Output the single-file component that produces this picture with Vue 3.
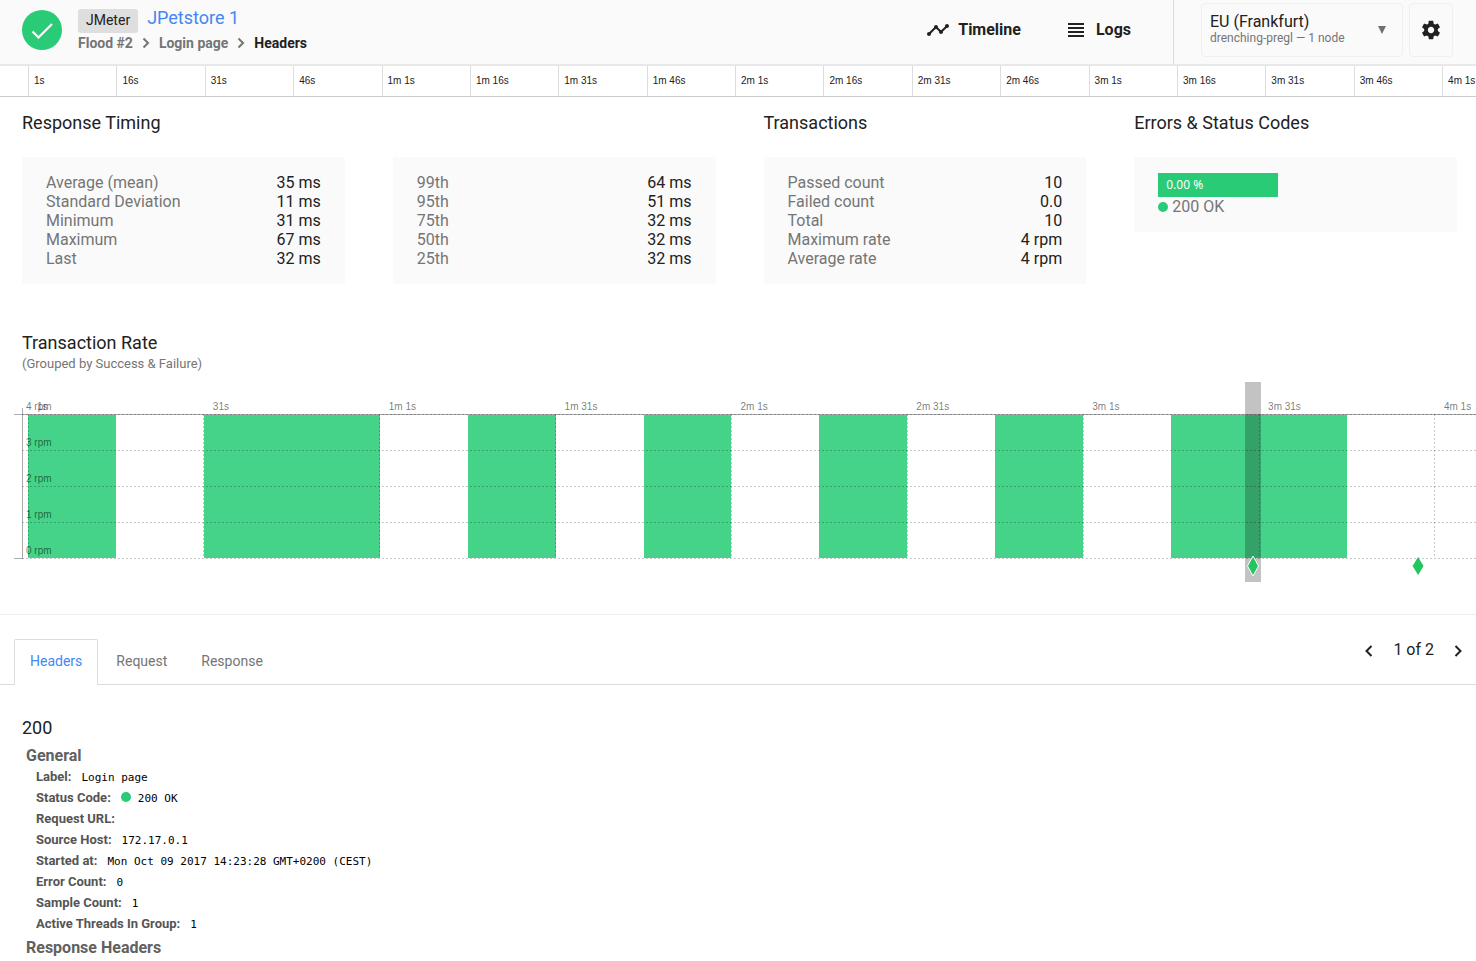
<script setup>
import { ref } from 'vue'

const ticks = ['1s', '16s', '31s', '46s', '1m 1s', '1m 16s', '1m 31s', '1m 46s', '2m 1s', '2m 16s', '2m 31s', '2m 46s', '3m 1s', '3m 16s', '3m 31s', '3m 46s', '4m 1s']

const timing = [
  ['Average (mean)', '35 ms'],
  ['Standard Deviation', '11 ms'],
  ['Minimum', '31 ms'],
  ['Maximum', '67 ms'],
  ['Last', '32 ms'],
]
const percentiles = [
  ['99th', '64 ms'],
  ['95th', '51 ms'],
  ['75th', '32 ms'],
  ['50th', '32 ms'],
  ['25th', '32 ms'],
]
const transactions = [
  ['Passed count', '10'],
  ['Failed count', '0.0'],
  ['Total', '10'],
  ['Maximum rate', '4 rpm'],
  ['Average rate', '4 rpm'],
]
const groups = [
  { title: 'Response Timing', rows: timing },
  { title: '', rows: percentiles },
  { title: 'Transactions', rows: transactions },
]

// Seconds covered by the chart's horizontal axis
const span = 247
const pct = (seconds) => `${(seconds / span) * 100}%`

const bars = [[0, 15], [30, 60], [75, 90], [105, 120], [135, 150], [165, 180], [195, 225]]
const chartTicks = [[0, '1s'], [30, '31s'], [60, '1m 1s'], [90, '1m 31s'], [120, '2m 1s'], [150, '2m 31s'], [180, '3m 1s'], [210, '3m 31s'], [240, '4m 1s']]
const rates = [4, 3, 2, 1, 0]
const rateY = (rate) => 177 - rate * 36

const tabs = ['Headers', 'Request', 'Response']
const activeTab = ref('Headers')

const details = [
  ['Label:', 'Login page'],
  ['Status Code:', '200 OK', true],
  ['Request URL:', ''],
  ['Source Host:', '172.17.0.1'],
  ['Started at:', 'Mon Oct 09 2017 14:23:28 GMT+0200 (CEST)'],
  ['Error Count:', '0'],
  ['Sample Count:', '1'],
  ['Active Threads In Group:', '1'],
]
</script>

<template>
  <div class="page">
    <header class="topbar">
      <svg class="status" viewBox="0 0 40 40" role="img" aria-label="Passed">
        <circle cx="20" cy="20" r="20" fill="#29cb76" />
        <path d="M10.5 21.5 16.5 27.5 30 14" fill="none" stroke="#fff" stroke-width="2.2" />
      </svg>
      <div class="heading">
        <div class="project">
          <span class="tag">JMeter</span>
          <a href="#" class="project-link">JPetstore 1</a>
        </div>
        <nav class="crumbs" aria-label="Breadcrumb">
          <a href="#">Flood #2</a>
          <svg viewBox="0 0 8 12"><path d="M1.5 1.5 6 6 1.5 10.5" /></svg>
          <a href="#">Login page</a>
          <svg viewBox="0 0 8 12"><path d="M1.5 1.5 6 6 1.5 10.5" /></svg>
          <span class="current">Headers</span>
        </nav>
      </div>
      <nav class="views" aria-label="Views">
        <a href="#">
          <svg width="24" height="24" viewBox="0 0 24 24"><path d="M23 8c0 1.1-.9 2-2 2-.18 0-.35-.02-.51-.07l-3.56 3.55c.05.16.07.34.07.52 0 1.1-.9 2-2 2s-2-.9-2-2c0-.18.02-.36.07-.52l-2.55-2.55c-.16.05-.34.07-.52.07s-.36-.02-.52-.07l-4.55 4.56c.05.16.07.33.07.51 0 1.1-.9 2-2 2s-2-.9-2-2 .9-2 2-2c.18 0 .35.02.51.07l4.56-4.55C8.02 9.36 8 9.18 8 9c0-1.1.9-2 2-2s2 .9 2 2c0 .18-.02.36-.07.52l2.55 2.55c.16-.05.34-.07.52-.07s.36.02.52.07l3.55-3.56C19.02 8.35 19 8.18 19 8c0-1.1.9-2 2-2s2 .9 2 2z" /></svg>
          Timeline
        </a>
        <a href="#">
          <svg width="24" height="24" viewBox="0 0 24 24"><path d="M4 5h16v2H4zM4 9h16v2H4zM4 13h16v2H4zM4 17h16v2H4z" /></svg>
          Logs
        </a>
      </nav>
      <div class="tools">
        <label class="region">
          <span class="region-text">
            <select aria-label="Region"><option>EU (Frankfurt)</option></select>
            <span class="region-node">drenching-pregl — 1 node</span>
          </span>
          <svg width="8" height="8" viewBox="0 0 8 8"><path d="M0 0h8L4 8z" fill="#707070" /></svg>
        </label>
        <button class="gear" type="button" aria-label="Settings">
          <svg width="22" height="22" viewBox="0 0 24 24"><path d="M19.43 12.98c.04-.32.07-.64.07-.98s-.03-.66-.07-.98l2.11-1.65c.19-.15.24-.42.12-.64l-2-3.46c-.12-.22-.39-.3-.61-.22l-2.49 1c-.52-.4-1.08-.73-1.69-.98l-.38-2.65C14.46 2.18 14.25 2 14 2h-4c-.25 0-.46.18-.49.42l-.38 2.65c-.61.25-1.17.59-1.69.98l-2.49-1c-.23-.09-.49 0-.61.22l-2 3.46c-.13.22-.07.49.12.64l2.11 1.65c-.04.32-.07.65-.07.98s.03.66.07.98l-2.11 1.65c-.19.15-.24.42-.12.64l2 3.46c.12.22.39.3.61.22l2.49-1c.52.4 1.08.73 1.69.98l.38 2.65c.03.24.24.42.49.42h4c.25 0 .46-.18.49-.42l.38-2.65c.61-.25 1.17-.59 1.69-.98l2.49 1c.23.09.49 0 .61-.22l2-3.46c.12-.22.07-.49-.12-.64l-2.11-1.65zM12 15.5c-1.93 0-3.5-1.57-3.5-3.5s1.57-3.5 3.5-3.5 3.5 1.57 3.5 3.5-1.57 3.5-3.5 3.5z" /></svg>
        </button>
      </div>
    </header>

    <div class="ruler">
      <span v-for="tick in ticks" :key="tick">{{ tick }}</span>
    </div>

    <section class="stats">
      <div v-for="group in groups" :key="group.rows[0][0]">
        <h2 class="title">{{ group.title }}</h2>
        <dl class="card">
          <div v-for="row in group.rows" :key="row[0]" class="stat">
            <dt>{{ row[0] }}</dt>
            <dd>{{ row[1] }}</dd>
          </div>
        </dl>
      </div>
      <div>
        <h2 class="title">Errors &amp; Status Codes</h2>
        <div class="card">
          <div class="rate">0.00 %</div>
          <div class="code"><i class="dot"></i>200 OK</div>
        </div>
      </div>
    </section>

    <section class="rate-section">
      <h2 class="title">Transaction Rate</h2>
      <p class="subtitle">(Grouped by Success &amp; Failure)</p>
      <div class="chart">
        <svg class="plot" width="100%" height="200" role="img" aria-label="Transaction rate over time">
          <g class="bars">
            <rect v-for="bar in bars" :key="bar[0]" :x="pct(bar[0])" y="33" :width="pct(bar[1] - bar[0])" height="143" />
          </g>
          <g class="labels">
            <text v-for="tick in chartTicks" :key="tick[1]" :x="pct(tick[0])" y="28" dx="9">{{ tick[1] }}</text>
            <text v-for="rate in rates" :key="rate" x="-2" :y="rateY(rate) - 5">{{ rate }} rpm</text>
          </g>
          <g class="axis">
            <line x1="-14" x2="100%" y1="32" y2="32" />
            <path d="M-6 26V176H-14" />
          </g>
          <g class="grid">
            <line v-for="tick in chartTicks" :key="tick[1]" :x1="pct(tick[0])" :x2="pct(tick[0])" y1="32" y2="176" />
            <svg x="-6" y="0" width="101%" height="200" overflow="visible">
              <line v-for="rate in rates" :key="rate" x1="0" x2="100%" :y1="rateY(rate) - 1" :y2="rateY(rate) - 1" />
            </svg>
          </g>
          <svg x="84.6%" y="0" width="1" height="200" overflow="visible">
            <rect x="-8" y="0" width="16" height="200" fill="#000" fill-opacity=".235" />
            <path d="M0 174 5.500 184 0 194 -5.500 184z" fill="#22c55e" stroke="#fff" />
          </svg>
          <svg x="96%" y="0" width="1" height="200" overflow="visible">
            <path d="M0 175 5.500 184 0 193 -5.500 184z" fill="#22c55e" />
          </svg>
        </svg>
      </div>
    </section>

    <section class="samples">
      <div class="tabbar">
        <div class="tabs" role="tablist">
          <button v-for="tab in tabs" :key="tab" type="button" role="tab" class="tab" :class="{ active: tab === activeTab }" :aria-selected="tab === activeTab" @click="activeTab = tab">{{ tab }}</button>
        </div>
        <div class="pager">
          <button type="button" aria-label="Previous"><svg width="8" height="12" viewBox="0 0 8 12"><path d="M6.500 1 1.500 6 6.500 11" /></svg></button>
          <span>1 of 2</span>
          <button type="button" aria-label="Next"><svg width="8" height="12" viewBox="0 0 8 12"><path d="M1.500 1 6.500 6 1.500 11" /></svg></button>
        </div>
      </div>
      <div class="details">
        <h2 class="title">200</h2>
        <h3>General</h3>
        <dl>
          <div v-for="row in details" :key="row[0]" class="detail">
            <dt>{{ row[0] }}</dt>
            <dd><i v-if="row[2]" class="dot"></i>{{ row[1] }}</dd>
          </div>
        </dl>
        <h3>Response Headers</h3>
      </div>
    </section>
  </div>
</template>

<style>
body {
  background: #fff;
}
</style>

<style scoped>
.page {
  overflow-x: hidden;
  font-family: Roboto, sans-serif;
  font-size: 16px;
  line-height: 19px;
  color: #212121;
}
a {
  color: inherit;
  text-decoration: none;
}
button,
select {
  font: inherit;
  color: inherit;
  cursor: pointer;
}
h2,
h3,
p,
dl,
dd {
  margin: 0;
}
.title {
  font-size: 18px;
  line-height: 24px;
  font-weight: 400;
}
.dot {
  flex: none;
  width: 10px;
  height: 10px;
  border-radius: 50%;
  background: #29cb76;
}

.topbar {
  display: flex;
  align-items: center;
  height: 64px;
  background: #fafafa;
  border-bottom: 2px solid #e8e8e8;
}
.status {
  width: 40px;
  height: 40px;
  margin: 0 16px 4px 22px;
}
.heading {
  display: flex;
  flex-direction: column;
  align-self: flex-start;
  padding-top: 8px;
}
.project {
  display: flex;
  gap: 9px;
  line-height: 20px;
}
.tag {
  margin-top: 1px;
  padding: 1px 8px 3px;
  border-radius: 3px;
  background: #dedede;
  font-size: 14px;
}
.project-link {
  font-size: 18px;
  color: #4287f5;
}
.crumbs {
  display: flex;
  align-items: center;
  gap: 9px;
  font-size: 14px;
  line-height: 20px;
  font-weight: 700;
  color: #757575;
}
.crumbs svg {
  width: 8px;
  height: 12px;
  fill: none;
  stroke: #757575;
  stroke-width: 2;
}
.current {
  color: #212121;
}
.views {
  display: flex;
  gap: 43px;
  margin-left: auto;
  padding: 0 42px 5px 0;
  font-weight: 700;
}
.views a {
  display: flex;
  align-items: center;
  gap: 8px;
}
.views svg,
.gear svg {
  fill: #212121;
}
.tools {
  display: flex;
  align-items: flex-start;
  gap: 6px;
  align-self: stretch;
  padding: 3px 23px 0 27px;
  border-left: 1px solid #dcdcdc;
}
.region,
.gear {
  box-sizing: border-box;
  height: 54px;
  border: 1px solid #f0f0f0;
  border-radius: 4px;
  background: #fafafa;
}
.region {
  display: flex;
  align-items: center;
  justify-content: space-between;
  width: 202px;
  padding: 0 16px 0 8px;
}
.region-text {
  display: flex;
  flex-direction: column;
  padding-bottom: 4px;
}
.region select {
  appearance: none;
  padding: 0;
  border: 0;
  background: none;
  line-height: 19px;
}
.region-node {
  font-size: 12px;
  line-height: 14px;
  color: #757575;
}
.gear {
  display: flex;
  align-items: center;
  justify-content: center;
  width: 44px;
  padding: 0;
}

.ruler {
  display: grid;
  grid-template-columns: repeat(16, minmax(0, 60fr)) minmax(0, 23fr);
  padding-left: 28px;
  border-bottom: 1px solid #ccc;
  font: 10px/30px "Liberation Sans", Arial, sans-serif;
  white-space: nowrap;
}
.ruler span {
  padding-left: 5px;
  border-left: 1px solid #ddd;
}

.stats {
  display: grid;
  grid-template-columns: repeat(4, minmax(0, 1fr));
  gap: 48px;
  align-items: start;
  padding: 14px 19px 0 22px;
}
.stats .title {
  min-height: 24px;
  margin-bottom: 22px;
}
.card {
  padding: 16px 24px;
  background: #fafafa;
  color: #757575;
}
.stat {
  display: flex;
  justify-content: space-between;
}
.stat dd {
  color: #212121;
}
.rate {
  box-sizing: border-box;
  width: 120px;
  padding-left: 8px;
  background: #29cb76;
  color: #fff;
  font-family: "Noto Sans", sans-serif;
  font-size: 12px;
  line-height: 24px;
}
.code {
  display: flex;
  align-items: center;
  gap: 4px;
}

.rate-section {
  padding: 47px 0 32px;
  border-bottom: 1px solid #eee;
}
.rate-section .title,
.subtitle {
  padding-left: 22px;
}
.subtitle {
  font-size: 13px;
  line-height: 18px;
  color: #757575;
}
.chart {
  padding: 9px 0 0 28px;
}
.plot {
  display: block;
  overflow: visible;
}
.bars {
  fill: #45d389;
  shape-rendering: crispEdges;
}
.labels {
  font: 10px "Liberation Sans", Arial, sans-serif;
  fill: #000;
  fill-opacity: .54;
}
.grid {
  stroke: #000;
  stroke-opacity: .22;
  stroke-dasharray: 2 2;
  shape-rendering: crispEdges;
}
.axis {
  fill: none;
  stroke: #aaa;
  shape-rendering: crispEdges;
}

.tabbar {
  display: flex;
  align-items: flex-end;
  justify-content: space-between;
  padding: 24px 14px 0;
  border-bottom: 1px solid #dcdcdc;
}
.tabs {
  display: flex;
  gap: 2px;
  margin-bottom: -1px;
}
.tab {
  height: 46px;
  padding: 0 15px 2px;
  border: 1px solid transparent;
  border-bottom: 0;
  border-radius: 2px 2px 0 0;
  background: none;
  font-size: 14px;
  color: #757575;
}
.tab.active {
  border-color: #dcdcdc;
  background: #fff;
  color: #4287f5;
}
.pager {
  display: flex;
  align-items: center;
  gap: 20px;
  padding-bottom: 25px;
}
.pager button {
  display: flex;
  padding: 3px 0 0;
  border: 0;
  background: none;
}
.pager path {
  fill: none;
  stroke: #212121;
  stroke-width: 2;
}

.details {
  padding: 31px 22px 0;
}
.details .title {
  margin-bottom: 2px;
}
h3 {
  padding: 3px 4px 0;
  font-size: 16px;
  line-height: 21px;
  font-weight: 700;
  color: #616161;
}
.details dl {
  padding-left: 14px;
}
.detail {
  display: flex;
  align-items: baseline;
  gap: 10px;
  font-size: 13px;
  line-height: 21px;
}
.detail dt {
  font-weight: 700;
  color: #555;
}
.detail dd {
  display: flex;
  align-items: center;
  gap: 7px;
  font-family: "DejaVu Sans Mono", monospace;
  font-size: 11px;
  line-height: 19px;
  color: #000;
}
.detail .dot {
  align-self: flex-start;
  margin-top: 3px;
}
</style>
